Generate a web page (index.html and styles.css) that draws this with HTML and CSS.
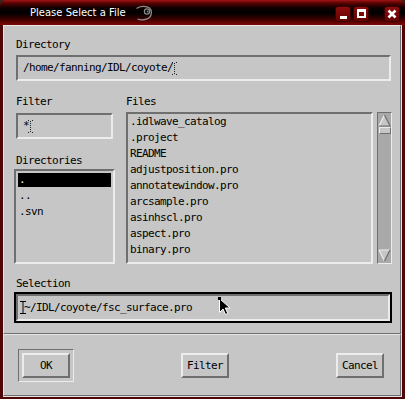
FILE: index.html
```html
<!DOCTYPE html>
<html lang="en">
<head>
  <meta charset="UTF-8" />
  <meta name="viewport" content="width=device-width, initial-scale=1.0"/>
  <title>Please Select a File</title>
  <link rel="stylesheet" href="styles.css">
</head>
<body>
  <div class="window">
    <div class="titlebar">
      <span class="title">Please Select a File</span>
      <svg class="logo" width="18" height="18" viewBox="0 0 18 18">
        <path d="M1.5 4.5 C5 2 11 1.5 14.5 4 C17 6 17 11 14.5 13.5 C12 16 6 16.5 2.5 15" fill="none" stroke="#8c8c8c" stroke-width="1.3"/>
        <circle cx="12" cy="7.5" r="2.6" fill="none" stroke="#8c8c8c" stroke-width="1.2"/>
        <circle cx="12.6" cy="7.5" r="0.9" fill="#8c8c8c"/>
      </svg>
      <div class="tbuttons">
        <span class="tbtn"><span class="min-glyph"></span></span>
        <span class="tbtn"><span class="max-glyph"></span></span>
        <span class="tbtn close">
          <svg width="10" height="10" viewBox="0 0 10 10"><path d="M1.5 1.5 L8.5 8.5 M8.5 1.5 L1.5 8.5" stroke="#fff" stroke-width="2.6"/></svg>
        </span>
      </div>
    </div>

    <div class="frame">
      <div class="client">
        <div class="panel top">
          <div class="label">Directory</div>
          <div class="field dir">/home/fanning/IDL/coyote/<svg class="dots" width="5" height="13" viewBox="0 0 5 13"><path d="M0 0h1v1H0zM4 0h1v1H4zM2 1h1v1H2zM2 3h1v1H2zM2 5h1v1H2zM2 7h1v1H2zM2 9h1v1H2zM2 11h1v1H2zM0 12h1v1H0zM4 12h1v1H4z" fill="#222"/></svg></div>

          <div class="row">
            <div class="leftcol">
              <div class="label">Filter</div>
              <div class="field filter">*<svg class="dots" width="5" height="13" viewBox="0 0 5 13"><path d="M0 0h1v1H0zM4 0h1v1H4zM2 1h1v1H2zM2 3h1v1H2zM2 5h1v1H2zM2 7h1v1H2zM2 9h1v1H2zM2 11h1v1H2zM0 12h1v1H0zM4 12h1v1H4z" fill="#222"/></svg></div>
              <div class="label dirs-label">Directories</div>
              <div class="list dirs">
                <div class="item selected">.</div>
                <div class="item">..</div>
                <div class="item">.svn</div>
              </div>
            </div>

            <div class="rightcol">
              <div class="label">Files</div>
              <div class="files-wrap">
                <div class="list files">
                  <div class="fitem">.idlwave_catalog</div>
                  <div class="fitem">.project</div>
                  <div class="fitem">README</div>
                  <div class="fitem">adjustposition.pro</div>
                  <div class="fitem">annotatewindow.pro</div>
                  <div class="fitem">arcsample.pro</div>
                  <div class="fitem">asinhscl.pro</div>
                  <div class="fitem">aspect.pro</div>
                  <div class="fitem">binary.pro</div>
                </div>
                <div class="scrollbar">
                  <svg class="arrow" width="13" height="13" viewBox="0 0 13 13">
                    <path d="M6.5 1 L1 12 L12 12 Z" fill="#c6c6c6"/>
                    <path d="M6.5 1 L1 12" stroke="#ececec" stroke-width="1.2" fill="none"/>
                    <path d="M6.5 1 L12 12 L1 12" stroke="#6f6f6f" stroke-width="1.2" fill="none"/>
                  </svg>
                  <div class="thumb"></div>
                  <div class="trough"></div>
                  <svg class="arrow" width="13" height="13" viewBox="0 0 13 13">
                    <path d="M6.5 12 L1 1 L12 1 Z" fill="#c6c6c6"/>
                    <path d="M1 1 L12 1 M1 1 L6.5 12" stroke="#ececec" stroke-width="1.2" fill="none"/>
                    <path d="M12 1 L6.5 12" stroke="#6f6f6f" stroke-width="1.2" fill="none"/>
                  </svg>
                </div>
              </div>
            </div>
          </div>

          <div class="label sel-label">Selection</div>
          <div class="selection">
            <div class="sel-field">
              <svg class="ibeam" width="6" height="13" viewBox="0 0 6 13"><path d="M0 0.5H6M3 0V13M0 12.5H6" stroke="#000" stroke-width="1"/></svg>~/IDL/coyote/fsc_surface.pro
            </div>
            <svg class="pointer" width="14" height="20" viewBox="0 0 14 20">
              <path d="M1.5 1.5 L1.5 15.5 L5 12 L7.5 17.5 L9.8 16.5 L7.3 11 L12 11 Z" fill="#000" stroke="#fff" stroke-width="1"/>
              <rect x="0" y="0" width="3" height="3" fill="#000"/>
            </svg>
          </div>
        </div>

        <div class="panel bottom">
          <div class="default-ring"><button class="btn">OK</button></div>
          <button class="btn spaced">Filter</button>
          <button class="btn spaced">Cancel</button>
        </div>
      </div>
    </div>
  </div>
</body>
</html>
```

FILE: styles.css
```css
:root {
  --bg: #c6c6c6;
  --dark: #6f6f6f;
  --light: #ececec;
  --border-red: #4e0606;
  --mono: 'DejaVu Sans Mono', 'Liberation Mono', monospace;
}

* {
  box-sizing: border-box;
}

body {
  margin: 0;
  background: #3a2418;
  font-family: var(--mono);
  font-size: 11px;
  letter-spacing: -0.62px;
  color: #000;
}

.window {
  width: 405px;
  height: 399px;
  border-radius: 6px 6px 0 0;
  overflow: hidden;
}

/* title bar */
.titlebar {
  height: 25px;
  display: flex;
  align-items: center;
  padding: 0 5px 0 30px;
  background: linear-gradient(#a31414 0, #5a0202 3px, #0c0000 8px, #000 13px, #2e0000 18px, #6a0202 23px, #7c0a0a 25px);
}

.title {
  font-family: 'DejaVu Sans', sans-serif;
  font-size: 10px;
  letter-spacing: 0;
  color: #fff;
}

.logo {
  margin-left: 9px;
}

.tbuttons {
  margin-left: auto;
  margin-top: 2px;
  display: flex;
}

.tbtn {
  width: 16px;
  height: 16px;
  border-radius: 3px;
  background: linear-gradient(#8e0c0c, #640202);
  border: 1px solid #3c0000;
  display: flex;
  align-items: center;
  justify-content: center;
  margin-left: 2px;
}

.tbtn.close {
  margin-left: 15px;
}

.min-glyph {
  width: 7px;
  height: 3px;
  background: #fff;
  margin-top: 7px;
}

.max-glyph {
  width: 9px;
  height: 9px;
  border: 2px solid #fff;
  border-top-width: 3px;
}

/* window body */
.frame {
  height: 374px;
  border-left: 3px solid var(--border-red);
  border-right: 3px solid var(--border-red);
  border-bottom: 2px solid var(--border-red);
}

.client {
  height: 372px;
  background: var(--bg);
  border-right: 1px solid #e2e2e2;
  border-bottom: 1px solid #e2e2e2;
}

.panel {
  border: 1px solid;
  border-color: #e6e6e6 var(--dark) var(--dark) #e6e6e6;
}

.panel.top {
  height: 309px;
  padding: 12px 0 0 12px;
}

.label {
  height: 14px;
  line-height: 14px;
  white-space: nowrap;
}

.field {
  height: 26px;
  border: 2px solid;
  border-color: var(--dark) var(--light) var(--light) var(--dark);
  padding-left: 5px;
  line-height: 22px;
  display: flex;
  align-items: center;
  white-space: nowrap;
}

.dots {
  margin-left: -1px;
  margin-top: 1px;
}

.field.dir {
  width: 375px;
  margin-top: 3px;
}

.row {
  display: flex;
  margin-top: 14px;
}

.leftcol {
  width: 110px;
}

.field.filter {
  width: 97px;
  margin-top: 4px;
}

.dirs-label {
  margin-top: 15px;
}

.list {
  border: 2px solid;
  border-color: var(--dark) var(--light) var(--light) var(--dark);
}

.list.dirs {
  width: 101px;
  height: 95px;
  margin: 1px 0 0 -2px;
  padding: 2px;
}

.item {
  height: 14px;
  line-height: 14px;
  padding-left: 1px;
  margin-bottom: 2px;
}

.item.selected {
  background: #000;
  color: #fff;
}

.files-wrap {
  display: flex;
  margin-top: 3px;
}

.list.files {
  width: 247px;
  height: 152px;
  padding-left: 2px;
}

.fitem {
  height: 16px;
  line-height: 16px;
  white-space: nowrap;
}

.scrollbar {
  width: 15px;
  height: 152px;
  margin-left: 4px;
  background: #a9a9a9;
  border: 1px solid;
  border-color: var(--dark) var(--light) var(--light) var(--dark);
  display: flex;
  flex-direction: column;
  align-items: center;
  padding: 1px 0;
}

.arrow {
  flex: none;
  display: block;
}

.thumb {
  width: 12px;
  height: 7px;
  background: var(--bg);
  border: 1px solid;
  border-color: var(--light) var(--dark) var(--dark) var(--light);
}

.trough {
  flex: 1;
}

.sel-label {
  margin-top: 13px;
}

.selection {
  position: relative;
  width: 378px;
  height: 31px;
  margin: 1px 0 0 -2px;
  border: 2px solid #000;
}

.sel-field {
  height: 27px;
  border: 2px solid;
  border-color: var(--dark) var(--light) var(--light) var(--dark);
  padding-left: 4px;
  display: flex;
  align-items: center;
  white-space: nowrap;
}

.ibeam {
  margin-right: -4px;
  position: relative;
  left: -2px;
}

.pointer {
  position: absolute;
  left: 202px;
  top: 3px;
}

/* buttons */
.panel.bottom {
  height: 62px;
  padding: 14px 16px 0 14px;
  display: flex;
  justify-content: space-between;
  align-items: flex-start;
}

.default-ring {
  width: 56px;
  height: 33px;
  padding: 3px;
  border: 1px solid;
  border-color: var(--dark) var(--light) var(--light) var(--dark);
}

.btn {
  width: 48px;
  height: 25px;
  padding: 0;
  background: var(--bg);
  border: 2px solid;
  border-color: var(--light) var(--dark) var(--dark) var(--light);
  font-family: var(--mono);
  font-size: 11px;
  letter-spacing: -0.62px;
  color: #000;
}

.btn.spaced {
  margin-top: 4px;
}
```
